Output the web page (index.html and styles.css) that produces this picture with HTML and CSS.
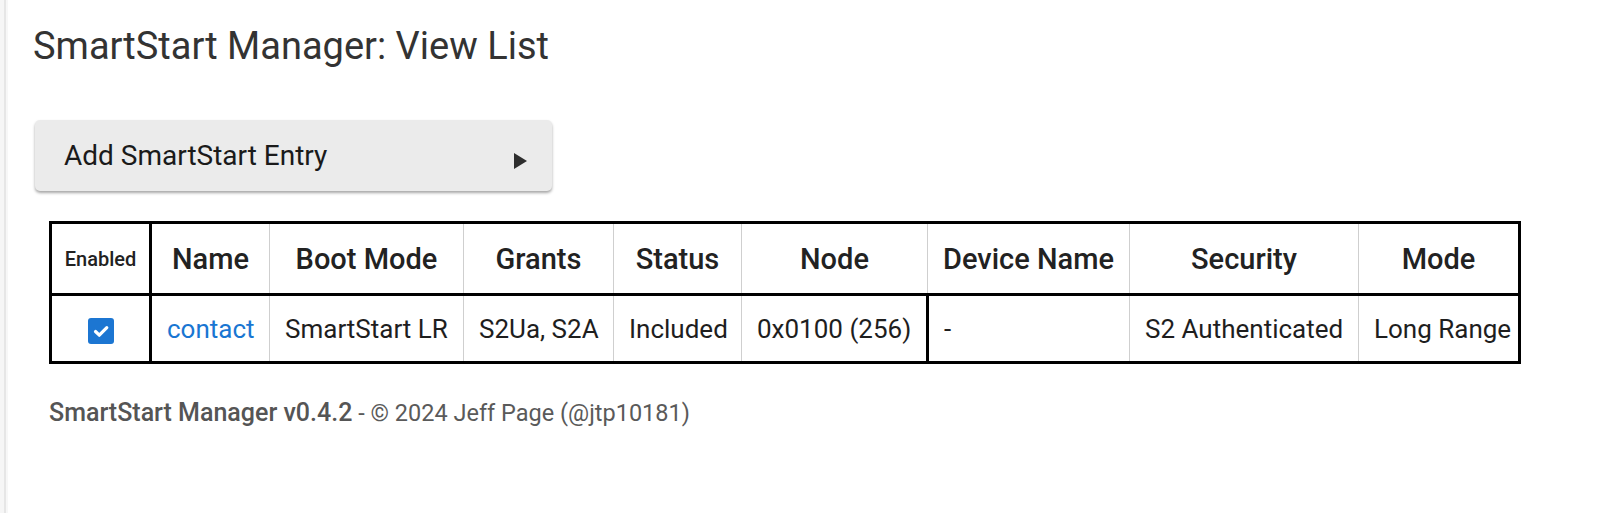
FILE: index.html
```html
<!DOCTYPE html>
<html lang="en">
<head>
<meta charset="utf-8">
<title>SmartStart Manager: View List</title>
<link rel="stylesheet" href="styles.css">
</head>
<body>
<main class="page">
  <h1 class="title">SmartStart Manager: View List</h1>

  <div class="section-btn">
    <span class="section-label">Add SmartStart Entry</span>
    <span class="arrow"></span>
  </div>

  <table class="list">
    <colgroup>
      <col class="c-enabled">
      <col class="c-name">
      <col class="c-boot">
      <col class="c-grants">
      <col class="c-status">
      <col class="c-node">
      <col class="c-device">
      <col class="c-security">
      <col class="c-mode">
    </colgroup>
    <thead>
      <tr class="head-row">
        <th class="th-enabled">Enabled</th>
        <th>Name</th>
        <th>Boot Mode</th>
        <th>Grants</th>
        <th>Status</th>
        <th>Node</th>
        <th>Device Name</th>
        <th>Security</th>
        <th>Mode</th>
      </tr>
    </thead>
    <tbody>
      <tr class="body-row">
        <td class="td-enabled">
          <span class="checkbox">
            <svg viewBox="0 0 26 26" width="26" height="26" aria-hidden="true">
              <path d="M7.5 13.5 L11.3 17.2 L18.8 9.6" fill="none" stroke="#fff" stroke-width="3.2" stroke-linecap="round" stroke-linejoin="round"/>
            </svg>
          </span>
        </td>
        <td><a class="link" href="#">contact</a></td>
        <td>SmartStart LR</td>
        <td>S2Ua, S2A</td>
        <td>Included</td>
        <td class="td-node">0x0100 (256)</td>
        <td>-</td>
        <td>S2 Authenticated</td>
        <td>Long Range</td>
      </tr>
    </tbody>
  </table>

  <p class="footer"><strong class="footer-app">SmartStart Manager v0.4.2</strong> - © 2024 Jeff Page (@jtp10181)</p>
</main>
</body>
</html>
```

FILE: styles.css
```css
html, body {
  margin: 0;
  padding: 0;
  background: #ffffff;
}

body {
  font-family: Roboto, "Liberation Sans", Arial, sans-serif;
  color: #222222;
  min-height: 513px;
  background:
    linear-gradient(to right, #f6f6f6 0, #f6f6f6 4px, #e6e6e6 4px, #e6e6e6 6px, #f7f7f7 6px, #f7f7f7 8px, #ffffff 8px);
}

.page {
  padding: 23px 0 0 33px;
}

.title {
  margin: 0;
  font-size: 38px;
  line-height: 46px;
  font-weight: 400;
  color: #333333;
}

.section-btn {
  margin: 51px 0 0 2px;
  width: 517px;
  height: 71px;
  box-sizing: border-box;
  padding: 0 25px 0 29px;
  display: flex;
  align-items: center;
  justify-content: space-between;
  background: #ebebeb;
  border-radius: 5px;
  box-shadow: 0 2px 3px rgba(0, 0, 0, 0.35);
}

.section-label {
  font-size: 28px;
  color: #1a1a1a;
}

.arrow {
  width: 0;
  height: 0;
  margin-top: 10px;
  border-left: 13px solid #2e2e2e;
  border-top: 8px solid transparent;
  border-bottom: 8px solid transparent;
}

.list {
  margin: 30px 0 0 16px;
  border-collapse: collapse;
  table-layout: fixed;
  width: 1472px;
  border: 3px solid #000000;
}

.c-enabled { width: 100px; }
.c-name { width: 119px; }
.c-boot { width: 194px; }
.c-grants { width: 150px; }
.c-status { width: 128px; }
.c-node { width: 186px; }
.c-device { width: 202px; }
.c-security { width: 229px; }
.c-mode { width: 161px; }

.head-row {
  height: 72px;
}

.body-row {
  height: 68px;
}

.list th,
.list td {
  padding: 0 15px;
  border-right: 1px solid #cfcfcf;
  vertical-align: middle;
  white-space: nowrap;
  overflow: hidden;
}

.list th {
  font-size: 29px;
  font-weight: 500;
  color: #222222;
  text-align: center;
  border-bottom: 3px solid #000000;
}

.list td {
  font-size: 26px;
  font-weight: 400;
  color: #1e1e1e;
  text-align: left;
}

.list .th-enabled {
  font-size: 20px;
  padding: 0;
  border-right: 3px solid #000000;
}

.list .td-enabled {
  padding: 0;
  text-align: center;
  border-right: 3px solid #000000;
}

.list .td-node {
  border-right: 3px solid #000000;
}

.checkbox {
  display: inline-block;
  width: 26px;
  height: 26px;
  border-radius: 3px;
  background: #1c76d2;
  vertical-align: middle;
}

.checkbox svg {
  display: block;
}

.link {
  color: #1976d2;
  text-decoration: none;
}

.footer {
  margin: 35px 0 0 16px;
  font-size: 23.5px;
  line-height: 28px;
  color: #5a5a5a;
}

.footer-app {
  font-weight: 500;
  font-size: 25px;
  color: #555555;
}
```
